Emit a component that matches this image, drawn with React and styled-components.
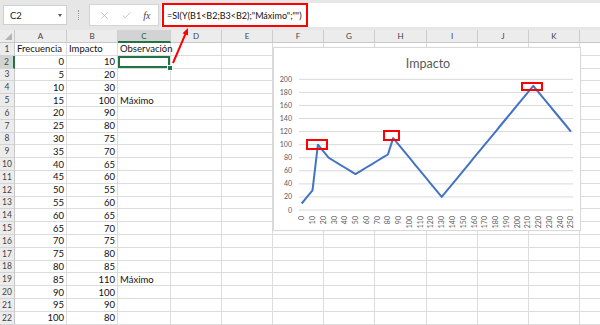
import React from 'react'
import styled, { createGlobalStyle } from 'styled-components'
import { X, Check } from 'lucide-react'

const COLS = [15, 52, 51, 53, 51, 51, 51, 51, 52, 51, 51, 51, 30]
const LETTERS = ['A', 'B', 'C', 'D', 'E', 'F', 'G', 'H', 'I', 'J', 'K', '']
const IMPACTO = [10, 20, 30, 100, 90, 80, 75, 70, 65, 60, 55, 60, 65, 70, 75, 80, 85, 110, 100, 90, 80]
const NOTES = { 5: 'Máximo', 19: 'Máximo' }

// serie completa del grafico: frecuencia 0..250 de 5 en 5
const serie = (() => {
    const out = []
    let v = 0
    for (let f = 0; f <= 250; f += 5) {
        const i = f / 5
        if (i < IMPACTO.length) v = IMPACTO[i]
        else if (f <= 130) v = v - 10
        else if (f <= 215) v = v + 10
        else v = v - 10
        out.push([f, v])
    }
    return out
})()

const App = () => {
    const rows = []
    for (let r = 1; r <= 22; r++) rows.push(r)

    return (
        <Page>
            <GlobalStyle />
            <TopBar>
                <NameBox>
                    C2
                    <Caret />
                </NameBox>
                <Dots />
                <FuncBox>
                    <X size={11} strokeWidth={1.4} color="#a6a6a6" />
                    <Check size={11} strokeWidth={1.4} color="#a6a6a6" />
                    <Fx>fx</Fx>
                </FuncBox>
                <FormulaInput>=SI(Y(B1&lt;B2;B3&lt;B2);"Máximo";"")</FormulaInput>
            </TopBar>

            <Sheet>
                <Corner />
                {LETTERS.map((l, i) => (
                    <ColHead key={i} $sel={l === 'C'}>{l}</ColHead>
                ))}
                {rows.map(r => (
                    <React.Fragment key={r}>
                        <RowHead $sel={r === 2}>{r}</RowHead>
                        <Cell $num>{r === 1 ? <Label>Frecuencia</Label> : (r - 2) * 5}</Cell>
                        <Cell $num>{r === 1 ? <Label>Impacto</Label> : IMPACTO[r - 2]}</Cell>
                        <Cell $active={r === 2}>
                            {r === 1 ? 'Observación' : NOTES[r] || ''}
                            {r === 2 && <Handle />}
                        </Cell>
                        {LETTERS.slice(3).map((l, i) => <Cell key={i} />)}
                    </React.Fragment>
                ))}
            </Sheet>

            <Chart>
                <ChartSvg />
            </Chart>

            <Mark $x={162} $y={3} $w={146} $h={24} />
            <Mark $x={306} $y={139} $w={22} $h={11} />
            <Mark $x={383} $y={130} $w={17} $h={11} />
            <Mark $x={521} $y={82} $w={22} $h={9} />

            <Arrow width="600" height="325">
                <line x1="173" y1="63" x2="185.4" y2="34.2" stroke="#ff0000" strokeWidth="2" />
                <polygon points="188,28 188,35.6 182.5,33.3" fill="#ff0000" />
            </Arrow>
        </Page>
    )
}

const yOf = v => 162 - v * 0.6535
const xOf = f => 27.7 + f * 1.077

const ChartSvg = () => {
    const ticks = [0, 20, 40, 60, 80, 100, 120, 140, 160, 180, 200]
    const cats = []
    for (let f = 0; f <= 250; f += 10) cats.push(f)
    const d = serie.map(([f, v], i) => (i ? 'L' : 'M') + xOf(f).toFixed(1) + ' ' + yOf(v).toFixed(1)).join(' ')

    return (
        <svg width="308" height="184" viewBox="0 0 308 184">
            <text x="154" y="20" textAnchor="middle" fontSize="12.5" fill="#595959" fontFamily="Lato, sans-serif">Impacto</text>
            {ticks.map(t => (
                <g key={t}>
                    <line x1="25" x2="299" y1={yOf(t)} y2={yOf(t)} stroke="#d9d9d9" strokeWidth="1" />
                    <text x="18" y={yOf(t) + 2.5} textAnchor="end" fontSize="7" fill="#595959" fontFamily="Lato, sans-serif">{t}</text>
                </g>
            ))}
            {cats.map(f => (
                <text
                    key={f}
                    x={xOf(f) + 2.5}
                    y="168"
                    textAnchor="end"
                    fontSize="7"
                    fill="#595959"
                    fontFamily="Lato, sans-serif"
                    transform={`rotate(-90 ${xOf(f) + 2.5} 168)`}
                >
                    {f}
                </text>
            ))}
            <path d={d} fill="none" stroke="#4472c4" strokeWidth="2" strokeLinejoin="round" />
        </svg>
    )
}

export default App

const GlobalStyle = createGlobalStyle`
body {
    margin: 0;
    background: #fff;
    font-family: Lato, "Liberation Sans", sans-serif;
}
`

const Page = styled.div`
position: relative;
width: 600px;
height: 325px;
overflow: hidden;
background: #fff;
`

const TopBar = styled.div`
display: flex;
align-items: center;
height: 30px;
padding-left: 3px;
background: #e6e6e6;
box-sizing: border-box;
`

const NameBox = styled.div`
display: flex;
align-items: center;
justify-content: space-between;
width: 64px;
height: 20px;
box-sizing: border-box;
padding: 0 4px 0 6px;
background: #fff;
border: 1px solid #cfcfcf;
font-size: 9.5px;
color: #222;
`

const Caret = styled.span`
width: 0;
height: 0;
border-left: 2.5px solid transparent;
border-right: 2.5px solid transparent;
border-top: 3px solid #555;
`

const Dots = styled.div`
width: 0;
height: 10px;
margin: 0 10px 0 11px;
border-left: 1px dotted #9a9a9a;
`

const FuncBox = styled.div`
display: flex;
align-items: center;
justify-content: space-around;
width: 70px;
height: 22px;
box-sizing: border-box;
padding: 0 2px 0 4px;
background: #fff;
border: 1px solid #d4d4d4;
`

const Fx = styled.span`
font-family: "Liberation Serif", serif;
font-style: italic;
font-size: 10px;
color: #444;
`

const FormulaInput = styled.div`
flex: 1;
display: flex;
align-items: center;
height: 24px;
margin-left: 2px;
padding-left: 6px;
background: #fff;
font-size: 9px;
color: #111;
white-space: nowrap;
`

const Sheet = styled.div`
display: grid;
grid-template-columns: ${COLS.map(c => c + 'px').join(' ')};
grid-template-rows: 13px;
grid-auto-rows: 12.8px;
font-size: 9.5px;
color: #111;
`

const Corner = styled.div`
position: relative;
background: #ececec;
border-right: 1px solid #c8c8c8;
border-bottom: 1px solid #c8c8c8;
&::after {
    content: '';
    position: absolute;
    right: 2px;
    bottom: 2px;
    border-left: 7px solid transparent;
    border-bottom: 7px solid #b4b4b4;
}
`

const ColHead = styled.div`
display: flex;
align-items: center;
justify-content: center;
background: ${p => (p.$sel ? '#d3d3d3' : '#ececec')};
border-right: 1px solid #cdcdcd;
border-bottom: ${p => (p.$sel ? '2px solid #217346' : '1px solid #c8c8c8')};
font-size: 8px;
color: ${p => (p.$sel ? '#1e5f3a' : '#444')};
box-sizing: border-box;
`

const RowHead = styled.div`
display: flex;
align-items: center;
justify-content: center;
background: ${p => (p.$sel ? '#d3d3d3' : '#ececec')};
border-right: ${p => (p.$sel ? '2px solid #217346' : '1px solid #c8c8c8')};
border-bottom: 1px solid #d4d4d4;
font-size: 8.5px;
color: ${p => (p.$sel ? '#1e5f3a' : '#444')};
box-sizing: border-box;
`

const Cell = styled.div`
position: relative;
display: flex;
align-items: center;
justify-content: ${p => (p.$num ? 'flex-end' : 'flex-start')};
padding: 0 2px;
border-right: 1px solid #dcdcdc;
border-bottom: 1px solid #dcdcdc;
box-sizing: border-box;
white-space: nowrap;
box-shadow: ${p => (p.$active ? 'inset 0 0 0 2px #217346' : 'none')};
`

const Label = styled.span`
position: absolute;
left: 2px;
`

const Handle = styled.span`
position: absolute;
right: -3px;
bottom: -3px;
width: 4px;
height: 4px;
background: #217346;
border: 1px solid #fff;
z-index: 2;
`

const Chart = styled.div`
position: absolute;
left: 273px;
top: 47px;
width: 308px;
height: 184px;
background: #fff;
border: 1px solid #d9d9d9;
box-sizing: border-box;
box-shadow: 0 0 1px rgba(0, 0, 0, 0.08);
`

const Mark = styled.div`
position: absolute;
left: ${p => p.$x}px;
top: ${p => p.$y}px;
width: ${p => p.$w}px;
height: ${p => p.$h}px;
border: 2px solid #ff0000;
box-sizing: border-box;
`

const Arrow = styled.svg`
position: absolute;
left: 0;
top: 0;
pointer-events: none;
`
